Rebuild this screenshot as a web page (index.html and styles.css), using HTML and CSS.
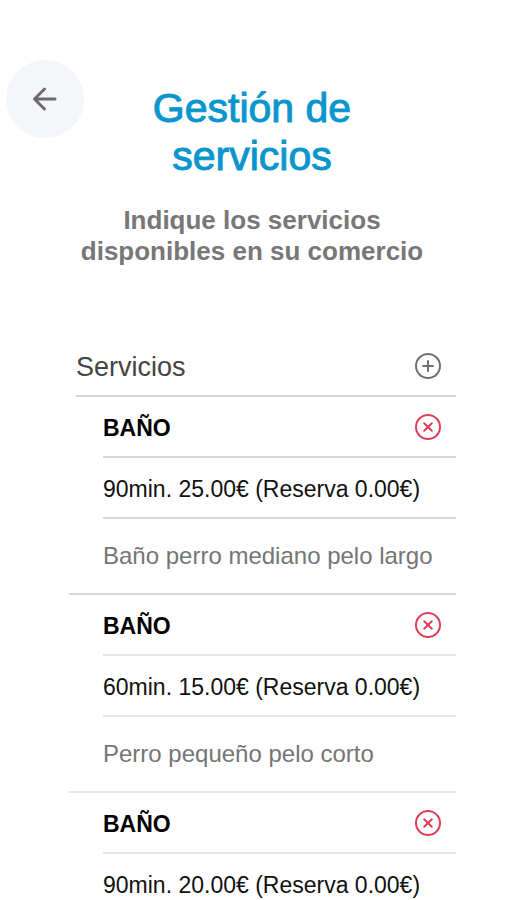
FILE: index.html
```html
<!DOCTYPE html>
<html lang="es">
<head>
  <meta charset="utf-8">
  <meta name="viewport" content="width=device-width, initial-scale=1">
  <title>Gestión de servicios</title>
  <link rel="stylesheet" href="styles.css">
</head>
<body>
  <header class="header">
    <button class="back" type="button" aria-label="Volver">
      <svg width="26" height="26" viewBox="0 0 26 26" aria-hidden="true"><path d="M23 13H3M12.500 3L2.500 13L12.500 23"/></svg>
    </button>
    <h1 class="title">Gestión de servicios</h1>
  </header>
  <p class="subtitle">Indique los servicios disponibles en su comercio</p>

  <main class="services">
    <div class="row heading">
      <h2 class="heading-text">Servicios</h2>
      <button class="icon-button add" type="button" aria-label="Añadir servicio">
        <svg width="28" height="28" viewBox="0 0 28 28" aria-hidden="true"><circle cx="14" cy="14" r="12"/><path d="M14 9V19M9 14H19"/></svg>
      </button>
    </div>

    <section class="service first">
      <div class="row">
        <h3 class="name">BAÑO</h3>
        <button class="icon-button remove" type="button" aria-label="Eliminar servicio">
          <svg width="28" height="28" viewBox="0 0 28 28" aria-hidden="true"><circle cx="14" cy="14" r="12"/><path d="M10.200 10.200L17.800 17.800M17.800 10.200L10.200 17.800"/></svg>
        </button>
      </div>
      <p class="row price">90min. 25.00€ (Reserva 0.00€)</p>
      <p class="description">Baño perro mediano pelo largo</p>
    </section>

    <section class="service">
      <div class="row">
        <h3 class="name">BAÑO</h3>
        <button class="icon-button remove" type="button" aria-label="Eliminar servicio">
          <svg width="28" height="28" viewBox="0 0 28 28" aria-hidden="true"><circle cx="14" cy="14" r="12"/><path d="M10.200 10.200L17.800 17.800M17.800 10.200L10.200 17.800"/></svg>
        </button>
      </div>
      <p class="row price">60min. 15.00€ (Reserva 0.00€)</p>
      <p class="description">Perro pequeño pelo corto</p>
    </section>

    <section class="service last">
      <div class="row">
        <h3 class="name">BAÑO</h3>
        <button class="icon-button remove" type="button" aria-label="Eliminar servicio">
          <svg width="28" height="28" viewBox="0 0 28 28" aria-hidden="true"><circle cx="14" cy="14" r="12"/><path d="M10.200 10.200L17.800 17.800M17.800 10.200L10.200 17.800"/></svg>
        </button>
      </div>
      <p class="row price">90min. 20.00€ (Reserva 0.00€)</p>
    </section>
  </main>
</body>
</html>
```
FILE: styles.css
```css
* {
  box-sizing: border-box;
}

body {
  margin: 0;
  padding-top: 60px;
  background: #fff;
  color: #111;
  font-family: "Liberation Sans", Arial, sans-serif;
  font-size: 23px;
}

h1, h2, h3, p {
  margin: 0;
}

button {
  border: 0;
  padding: 0;
  background: none;
  cursor: pointer;
}

svg {
  display: block;
  fill: none;
  stroke: currentColor;
  stroke-width: 2;
  stroke-linecap: round;
  stroke-linejoin: round;
}

.header {
  display: grid;
  grid-template-columns: 78px minmax(0, 240px) 78px;
  justify-content: space-between;
  padding: 0 9px 0 6px;
}

.back {
  display: grid;
  place-items: center;
  width: 78px;
  height: 78px;
  border-radius: 50%;
  background: #f4f6fa;
  color: #6c6c6c;
}

.back svg {
  stroke-width: 3;
}

.title {
  padding-top: 24px;
  color: #0a96cc;
  font-size: 41px;
  font-weight: 400;
  line-height: 48px;
  text-align: center;
  -webkit-text-stroke: 1px currentColor;
}

.subtitle {
  padding: 25px 75px 0 72px;
  color: #777;
  font-size: 26px;
  font-weight: 700;
  line-height: 31px;
  text-align: center;
}

.services {
  margin: 69px 51px 0 69px;
}

.row {
  display: flex;
  align-items: center;
  justify-content: space-between;
  height: 61px;
  border-bottom: 2px solid #e6e6e6;
}

.heading {
  margin-left: 7px;
  border-color: #d6d6d6;
}

.heading-text {
  padding-top: 3px;
  color: #444;
  font-size: 27px;
  font-weight: 400;
}

.icon-button {
  margin-right: 14px;
}

.add {
  color: #707070;
}

.remove {
  color: #e03e56;
}

.service {
  padding-left: 34px;
  border-bottom: 2px solid #e6e6e6;
}

.first,
.first .row {
  border-color: #d6d6d6;
}

.last {
  border-bottom: 0;
}

.name {
  padding-top: 3px;
  color: #000;
  font-size: 23px;
  font-weight: 700;
}

.price {
  padding-top: 3px;
  font-size: 23px;
}

.description {
  color: #757575;
  font-size: 24px;
  line-height: 74px;
}
```
